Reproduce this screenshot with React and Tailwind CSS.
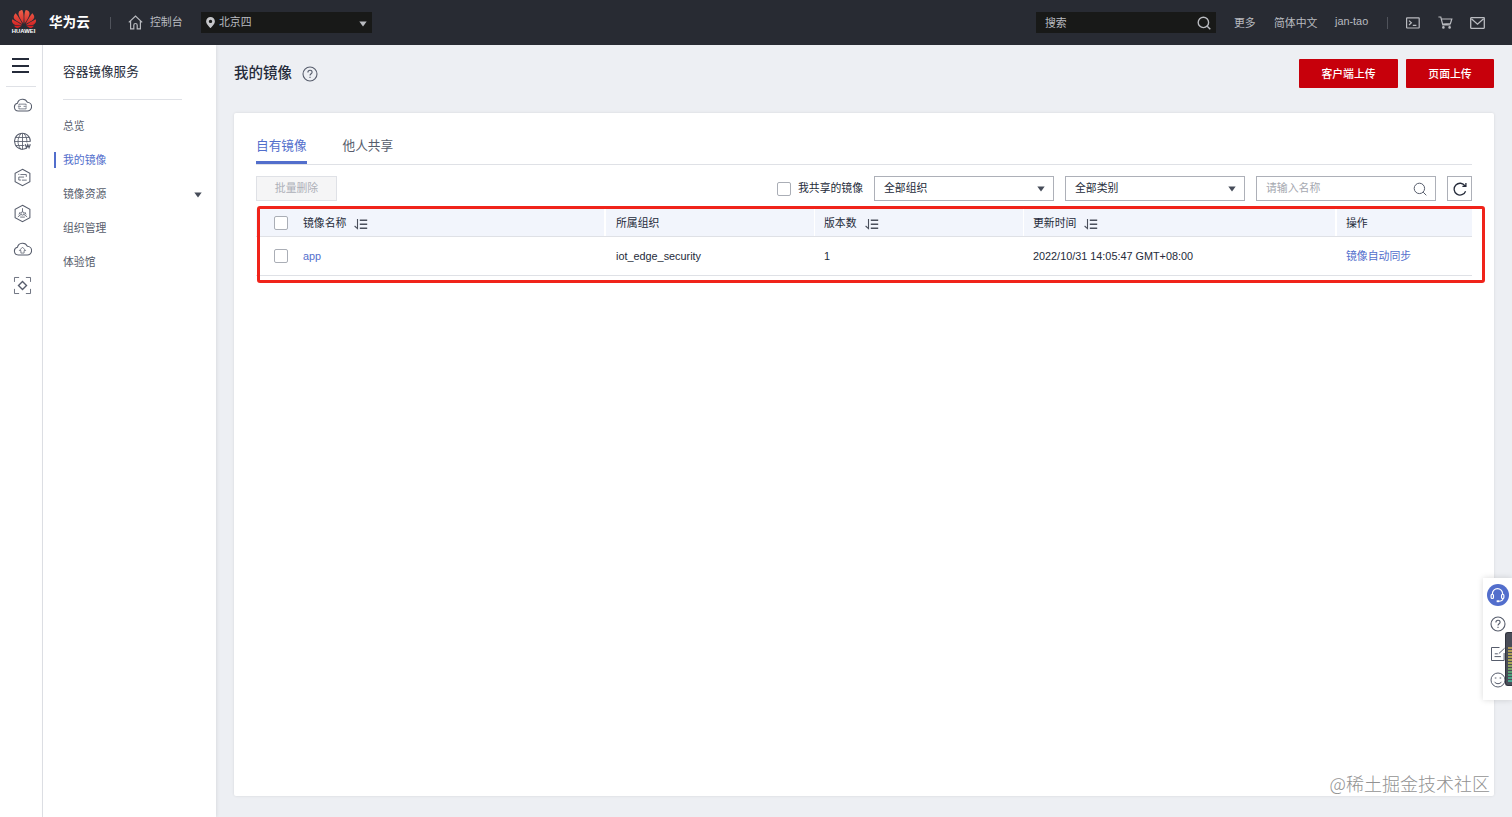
import { SiHuawei } from "react-icons/si";

const menuItems = [
  { label: "总览" },
  { label: "我的镜像", active: true },
  { label: "镜像资源", arrow: true },
  { label: "组织管理" },
  { label: "体验馆" },
];

const Caret = ({ className }) => (
  <svg viewBox="0 0 8 6" className={className} fill="currentColor">
    <path d="M.3.5h7.4L4 5.5z" />
  </svg>
);

const SearchIcon = ({ className }) => (
  <svg viewBox="0 0 14 14" className={className} fill="none" stroke="currentColor">
    <circle cx="6.4" cy="6.4" r="5.2" />
    <path d="M10.2 10.2 13.3 13.3" />
  </svg>
);

const SortIcon = () => (
  <svg viewBox="0 0 14 12" className="ml-2 mt-0.5 h-3 w-3.5" fill="none" stroke="#4b505c">
    <path d="M3.5 1v9.6L.6 8" strokeWidth="1.1" />
    <path d="M5.8 2.3h7.4M5.8 6.2h7.4M5.8 10.2h7.4" strokeWidth="1.4" />
  </svg>
);

const QuestionIcon = ({ className }) => (
  <svg viewBox="0 0 16 16" className={className} fill="none" stroke="currentColor" strokeWidth="1.1">
    <circle cx="8" cy="8" r="7" />
    <path d="M5.9 6.4c0-1.3.9-2.1 2.1-2.1s2.1.8 2.1 1.9c0 1.5-2.1 1.6-2.1 3.3M8 10.7v1.2" />
  </svg>
);

const Checkbox = () => (
  <span className="block h-3.5 w-3.5 shrink-0 rounded-[2px] border border-[#aaaeb6] bg-white" />
);

const Header = () => (
  <header className="flex h-[45px] shrink-0 items-center bg-[#282b33] text-[10.85px] text-[#b9bbc0]">
    <div className="ml-[11px] flex w-[25px] flex-col items-center">
      <svg className="absolute h-0 w-0">
        <defs>
          <linearGradient id="petal" x1="0" y1="0" x2="0" y2="1">
            <stop offset="0" stopColor="#f0604a" />
            <stop offset="1" stopColor="#cf1c20" />
          </linearGradient>
        </defs>
      </svg>
      <SiHuawei fill="url(#petal)" className="-mt-[3px] h-6 w-6" />
      <span className="-mt-[3px] text-[5.9px] leading-[7px] font-bold text-white">HUAWEI</span>
    </div>
    <span className="ml-[13px] w-[61px] text-[13.6px] font-bold text-white">华为云</span>
    <span className="h-3 w-px bg-[#50535b]" />
    <svg viewBox="0 0 15 15" className="ml-[17px] h-[15px] w-[15px]" fill="none" stroke="#b9bbc0" strokeWidth="1.2">
      <path d="M.8 7.4 7.5 1l6.7 6.4M2.6 6v7.8h3.2v-3.6a1.7 1.7 0 0 1 3.4 0v3.6h3.2V6" />
    </svg>
    <span className="-mt-px ml-[7px] w-[51px]">控制台</span>
    <div className="flex h-[21px] w-[171px] items-center bg-[#181918] pr-[5px] pl-[5px]">
      <svg viewBox="0 0 9 11" className="h-[11px] w-[9px]" fill="#c5c6c9">
        <path fillRule="evenodd" d="M4.5 0A4.4 4.4 0 0 0 .1 4.4C.1 7.2 4.5 11 4.5 11s4.4-3.8 4.4-6.6A4.4 4.4 0 0 0 4.5 0Zm0 2.7a1.7 1.7 0 1 1 0 3.4 1.7 1.7 0 0 1 0-3.4Z" />
      </svg>
      <span className="-mt-px ml-1 flex-1">北京四</span>
      <Caret className="mt-0.5 h-1.5 w-2" />
    </div>
    <div className="ml-auto flex h-[21px] w-[180px] items-center justify-between bg-[#181918] pr-[5px] pl-[9px]">
      <span>搜索</span>
      <SearchIcon className="h-3.5 w-3.5 stroke-[1.4]" />
    </div>
    <span className="ml-[18px] w-10">更多</span>
    <span className="w-[61px]">简体中文</span>
    <span className="-mt-[3px] w-[52px]">jan-tao</span>
    <span className="h-3 w-px bg-[#50535b]" />
    <svg viewBox="0 0 14 12" className="ml-[18px] h-3 w-3.5" fill="none" stroke="currentColor" strokeWidth="1.2">
      <rect x=".6" y=".8" width="12.6" height="10.2" rx=".5" />
      <path d="m3 3.6 2.4 2.2L3 8M6.8 8.3h3.6" />
    </svg>
    <svg viewBox="0 0 15 13" className="ml-[18px] h-[13px] w-[15px]" fill="none" stroke="currentColor" strokeWidth="1.2">
      <path d="M.4 1h2.4l2 8h7.6M3.4 3h10.4l-1.4 4.6-8 .5" />
      <circle cx="5.4" cy="11.4" r=".7" fill="currentColor" />
      <circle cx="11.6" cy="11.4" r=".7" fill="currentColor" />
    </svg>
    <svg viewBox="0 0 15 12" className="mr-[27px] ml-[17px] h-3 w-[15px]" fill="none" stroke="currentColor" strokeWidth="1.3">
      <rect x=".7" y=".7" width="13.6" height="10.6" rx=".5" />
      <path d="m1.4 1.8 6.1 5.4 6.1-5.4" />
    </svg>
  </header>
);

const railIcons = [
  // cloud server
  <>
    <path d="M5 14.2a3.7 3.7 0 0 1-.8-7.3A5 5 0 0 1 13.6 6a4.1 4.1 0 0 1-.2 8.2z" />
    <path d="M5.6 9V7.7h6.8V9M5.6 10.6v1.6h6.8v-1.6M4.6 9.8h3M10 9.8h3" strokeWidth=".7" />
  </>,
  // web
  <>
    <path d="M13.6 14.6A7.5 7.5 0 1 1 16.4 9" />
    <path d="M1.5 9h15M2.6 5.2h12.8M2.6 12.8h8.2M9 1.3v15.4M7.6 1.5c-3.8 4.6-3.8 10.4 0 15M10.4 1.5c2.2 2.6 3 5.4 2.7 8.4" strokeWidth=".8" />
    <path d="m11.6 11.6 1.2 3.2 1.2-3 1.2 3 1.2-3.2" strokeWidth="1.1" />
  </>,
  // hexagon list
  <>
    <path d="m9 1.2 7 3.8v8l-7 3.8L2 13V5z" />
    <path d="M5 6h1M7 6.2h5.6M5.5 8.6h5M8.4 11.5h4.6M5.5 8.6v2.8h2M12.6 6.2v2.2" strokeWidth=".8" />
  </>,
  // hexagon nodes
  <>
    <path d="m9 1.2 7 3.8v8l-7 3.8L2 13V5z" />
    <path d="M9 4v3.5M7.7 9.8 4.6 12.2M10.3 9.8l3.1 2.4M6.8 7.6 5.6 10M11.2 7.6l1.2 2.4M6.8 12.4h4.4" strokeWidth=".8" />
    <circle cx="9" cy="9" r="1.5" strokeWidth=".8" />
  </>,
  // cloud upload
  <>
    <path d="M5 14.2a3.7 3.7 0 0 1-.8-7.3A5 5 0 0 1 13.6 6a4.1 4.1 0 0 1-.2 8.2z" />
    <path d="M7.5 12.4V10H6l3-3.2 3 3.2h-1.5v2.4z" strokeWidth=".7" />
  </>,
  // scan
  <>
    <path d="M1.4 5.6V1.4h4.4M12.2 1.4h4.4v4.2M16.6 12.2v4.4h-4.4M5.8 16.6H1.4v-4.4" strokeWidth=".8" />
    <path d="M9 5.2 12.8 9 9 12.8 5.2 9z" strokeWidth="1.3" />
  </>,
];

const Rail = () => (
  <aside className="flex w-[43px] shrink-0 flex-col border-r border-[#dfe1e6] bg-white">
    <div className="mt-[13px] ml-3 flex h-[15px] w-[17px] flex-col justify-between">
      <span className="h-0.5 bg-[#252b3a]" />
      <span className="h-0.5 bg-[#252b3a]" />
      <span className="h-0.5 bg-[#252b3a]" />
    </div>
    <div className="mt-[13px] ml-1.5 h-px w-[30px] bg-[#dfe1e6]" />
    {railIcons.map((icon, i) => (
      <div key={i} className="flex h-9 items-center pl-[13px]">
        <svg viewBox="0 0 18 18" className="h-[19px] w-[19px]" fill="none" stroke="#575d6c">
          {icon}
        </svg>
      </div>
    ))}
  </aside>
);

const Sidebar = () => (
  <aside className="w-[173px] shrink-0 bg-white shadow-[1px_0_3px_rgba(0,0,0,0.08)]">
    <h2 className="pt-[17px] pl-5 text-[12.65px] leading-5 text-[#252b3a]">容器镜像服务</h2>
    <div className="mt-[17px] mb-[9px] ml-5 h-px w-[119px] bg-[#dfe1e6]" />
    {menuItems.map((item) => (
      <div key={item.label} className="flex h-[34px] items-center pr-3.5 pl-[11px]">
        <span className={item.active ? "h-4 w-0.5 bg-[#526ecc]" : "h-4 w-0.5"} />
        <span className={item.active ? "ml-[7px] flex-1 text-[#526ecc]" : "ml-[7px] flex-1 text-[#575d6c]"}>
          {item.label}
        </span>
        {item.arrow && <Caret className="mt-0.5 h-1.5 w-2 text-[#464c59]" />}
      </div>
    ))}
  </aside>
);

const Select = ({ children }) => (
  <div className="ml-[11px] flex h-[25px] w-[180px] items-center justify-between border border-[#adb0b8] pr-2 pl-[9px] text-[#252b3a]">
    <span className="-mt-0.5">{children}</span>
    <Caret className="mt-px h-1.5 w-2 text-[#464c59]" />
  </div>
);

const Table = () => (
  <div className="mt-2">
    <div className="grid h-7 grid-cols-[350px_209px_209px_313px_135px] border-b border-[#dfe1e6] bg-[#f2f5fc] text-[#252b3a]">
      <div className="flex items-center border-r-2 border-white pl-[18px]">
        <Checkbox />
        <span className="ml-[15px]">镜像名称</span>
        <SortIcon />
      </div>
      <div className="flex items-center border-r border-white pl-2.5">所属组织</div>
      <div className="flex items-center border-r border-white pl-[9px]">
        版本数
        <SortIcon />
      </div>
      <div className="flex items-center border-r-2 border-white pl-[9px]">
        更新时间
        <SortIcon />
      </div>
      <div className="flex items-center pl-[9px]">操作</div>
    </div>
    <div className="grid h-[39px] grid-cols-[350px_209px_209px_313px_135px] border-b border-[#dfe1e6] text-[#252b3a]">
      <div className="flex items-center pl-[18px]">
        <Checkbox />
        <a className="ml-[15px] text-[#526ecc]">app</a>
      </div>
      <div className="flex items-center pl-2.5">iot_edge_security</div>
      <div className="flex items-center pl-[9px]">1</div>
      <div className="flex items-center pl-[9px]">2022/10/31 14:05:47 GMT+08:00</div>
      <div className="flex items-center pl-[9px] text-[#526ecc]">镜像自动同步</div>
    </div>
  </div>
);

const HelpDock = () => (
  <div className="absolute top-[578px] right-0 flex h-[122px] w-[29px] flex-col items-center bg-white pt-1.5 text-[#575d6c] shadow-[0_0_6px_rgba(0,0,0,0.15)]">
    <div className="flex h-[22px] w-[22px] items-center justify-center rounded-full bg-[#526ecc]">
      <svg viewBox="0 0 16 16" className="h-[17px] w-[17px]" fill="none" stroke="white" strokeWidth="1.1">
        <path d="M3.2 7V6.3a4.8 4.8 0 0 1 9.6 0V7M13.2 10.4c0 1.8-1.6 3-3.8 3" />
        <rect x="2" y="6.8" width="2.2" height="4" rx="1" />
        <rect x="11.8" y="6.8" width="2.2" height="4" rx="1" />
        <path d="M7.2 13.4h2.4" strokeWidth="1.8" />
      </svg>
    </div>
    <QuestionIcon className="mt-2.5 h-4 w-4" />
    <svg viewBox="0 0 16 16" className="mt-3.5 h-4 w-4" fill="none" stroke="currentColor">
      <path d="M9.5 1.5h-8v13h12.6V7M4.5 10.6h6.4M4.8 7.8h3M8.8 7.6l5.8-5.4" />
    </svg>
    <svg viewBox="0 0 16 16" className="mt-2.5 h-4 w-4" fill="none" stroke="currentColor">
      <circle cx="8" cy="8" r="7" />
      <path d="M4.5 9.8c1.4 2.5 5.6 2.5 7 0M4.8 6h1.6M9.6 6h1.6" />
    </svg>
    {/* level meter peeking in from the edge */}
    <div className="absolute top-[54px] right-0 h-[54px] w-[7px] rounded-l-[3px] border border-r-0 border-[#30333d] bg-[#4a4d58] pt-3.5 pl-0.5">
      <div className="h-9 bg-[repeating-linear-gradient(to_bottom,transparent_0_2px,#4a4d58_2px_3px),linear-gradient(to_bottom,#b09a58,#a4a553_45%,#4da077_75%,#48a697)]" />
    </div>
  </div>
);

const App = () => {
  return (
    <div className="relative flex h-[817px] w-[1512px] flex-col overflow-hidden bg-[#edeff3] font-['Liberation_Sans','Noto_Sans_CJK_SC',sans-serif] text-[10.85px] leading-4">
      <Header />
      <div className="flex flex-1">
        <Rail />
        <Sidebar />
        <main className="flex flex-1 flex-col pr-[18px] pl-[18px]">
          <div className="flex h-[68px] items-start pt-3.5">
            <h1 className="mt-1 text-[14.5px] leading-5 font-medium text-[#252b3a]">我的镜像</h1>
            <QuestionIcon className="mt-[7px] ml-2.5 h-4 w-4 text-[#575d6c]" />
            <button className="ml-auto h-[29px] w-[99px] rounded-[1px] bg-[#c7000b] font-medium text-white">客户端上传</button>
            <button className="ml-2 h-[29px] w-[88px] rounded-[1px] bg-[#c7000b] font-medium text-white">页面上传</button>
          </div>

          <section className="h-[683px] rounded-[2px] bg-white px-[22px] shadow-[0_0_3px_rgba(0,0,0,0.1)]">
            <div className="flex h-[52px] items-end border-b border-[#dfe1e6] text-[12.65px]">
              <div className="h-[30px] border-b-3 border-[#526ecc] pt-1 text-[#526ecc]">自有镜像</div>
              <div className="ml-9 h-[30px] pt-1 text-[#575d6c]">他人共享</div>
            </div>

            <div className="mt-[11px] flex h-[25px] items-center">
              <button className="mr-auto h-[25px] w-[81px] border border-[#dfe1e6] bg-[#f5f5f6] pb-px text-[#adb0b8]">批量删除</button>
              <Checkbox />
              <span className="-mt-0.5 ml-[7px] text-[#252b3a]">我共享的镜像</span>
              <Select>全部组织</Select>
              <Select>全部类别</Select>
              <div className="ml-[11px] flex h-[25px] w-[180px] items-center justify-between border border-[#adb0b8] pr-2 pl-[9px]">
                <span className="-mt-0.5 text-[#a5a8b0]">请输入名称</span>
                <SearchIcon className="h-3.5 w-3.5 text-[#575d6c]" />
              </div>
              <button className="ml-[11px] flex h-[25px] w-[25px] items-center justify-center border border-[#adb0b8]">
                <svg viewBox="0 0 14 14" className="h-3.5 w-3.5" fill="none" stroke="#252b3a" strokeWidth="1.3">
                  <path d="M12.6 9.2A5.9 5.9 0 1 1 12 3.9M12.9 1v3.4H9.4" />
                </svg>
              </button>
            </div>

            <Table />
          </section>
        </main>
      </div>

      {/* highlight around the table */}
      <div className="absolute top-[206px] left-[257px] h-[77px] w-[1228px] rounded-[3px] border-3 border-[#f0231a]" />

      <HelpDock />

      <div className="absolute top-[771px] right-[22px] font-['Noto_Sans_CJK_SC',sans-serif] text-[18px] leading-6 font-light whitespace-nowrap text-[#929292]">
        @稀土掘金技术社区
      </div>
    </div>
  );
};

export default App;
